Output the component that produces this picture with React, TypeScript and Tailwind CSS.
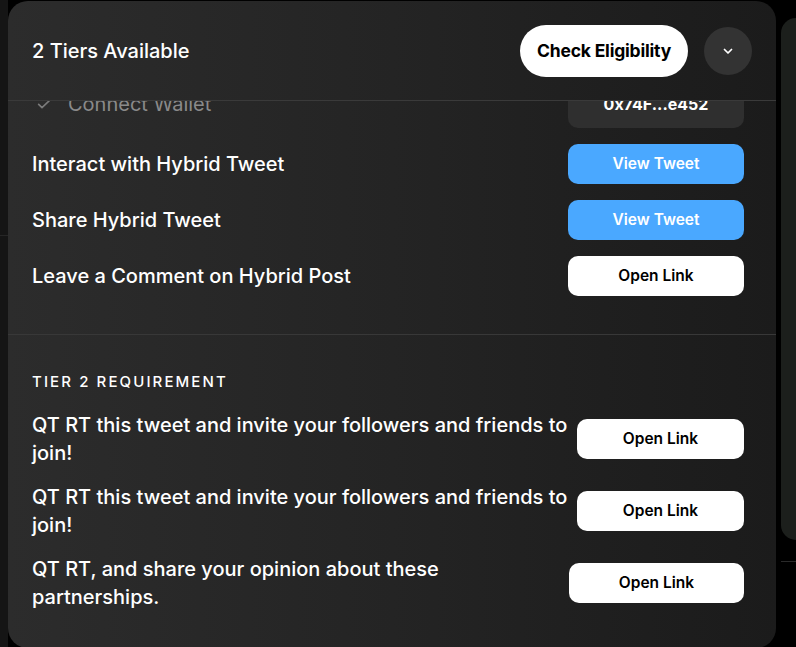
import React from 'react';

const font = "font-['Inter','Noto_Sans',sans-serif]";

function ChevronDown() {
  return (
    <svg width="12" height="12" viewBox="0 0 24 24" fill="none" stroke="white" strokeWidth="3.5" strokeLinecap="round" strokeLinejoin="round">
      <path d="M5 9l7 7 7-7" />
    </svg>
  );
}

function Check() {
  return (
    <svg width="16" height="16" viewBox="0 0 24 24" fill="none" stroke="#7a7a7a" strokeWidth="2.5" strokeLinecap="round" strokeLinejoin="round">
      <path d="M4 12.5l5 5L20 7" />
    </svg>
  );
}

const tier1 = [
  { label: 'Interact with Hybrid Tweet', action: 'View Tweet', blue: true },
  { label: 'Share Hybrid Tweet', action: 'View Tweet', blue: true },
  { label: 'Leave a Comment on Hybrid Post', action: 'Open Link', blue: false },
];

const tier2 = [
  { label: 'QT RT this tweet and invite your followers and friends to join!', w: 'w-[167px]' },
  { label: 'QT RT this tweet and invite your followers and friends to join!', w: 'w-[167px]' },
  { label: 'QT RT, and share your opinion about these partnerships.', w: 'w-[175px]' },
];

export default function App() {
  return (
    <div className={`flex w-[796px] h-[647px] bg-black overflow-hidden ${font}`}>
      {/* left backdrop */}
      <div className="w-2 shrink-0 bg-[#151515] flex flex-col">
        <div className="h-[235px]" />
        <div className="h-px bg-[#262626]" />
      </div>

      {/* panel */}
      <div className="w-[768px] shrink-0 h-[647px] mt-px rounded-[20px] bg-gradient-to-r from-[#2c2c2c] via-[#242424] to-[#1b1b1b] flex flex-col overflow-hidden">
        <div className="h-[100px] shrink-0 border-b border-[#3a3a3a] flex items-center justify-between pl-6 pr-6">
          <span className="text-[20px] font-medium text-white">2 Tiers Available</span>
          <div className="flex items-center gap-4">
            <button className="h-[52px] px-[17px] pt-0.5 rounded-full bg-white text-black text-[17.5px] font-bold tracking-[-0.2px]">
              Check Eligibility
            </button>
            <button className="w-12 h-12 rounded-full bg-[#333333] flex items-center justify-center">
              <ChevronDown />
            </button>
          </div>
        </div>

        <div className="flex-1 overflow-hidden">
          <div className="-mt-[13px] flex flex-col gap-4 pl-6 pr-8">
            <div className="h-10 flex items-center justify-between">
              <div className="flex items-center gap-4 pl-1 pb-2 text-[20px] text-[#8a8a8a]">
                <Check />
                <span>Connect Wallet</span>
              </div>
              <div className="w-[176px] h-10 pb-2 rounded-[10px] bg-[#2f2f2f] flex items-center justify-center text-[16px] font-bold text-white">
                0x74F...e452
              </div>
            </div>
            {tier1.map((r) => (
              <div key={r.label} className="h-10 flex items-center justify-between">
                <span className="text-[20px] font-medium text-white">{r.label}</span>
                <button
                  className={`w-[176px] h-10 rounded-[10px] text-[15.5px] font-semibold ${
                    r.blue ? 'bg-[#4aa8ff] text-white' : 'bg-white text-black'
                  }`}
                >
                  {r.action}
                </button>
              </div>
            ))}
          </div>

          <div className="mt-[38px] border-t border-[#383838] pt-[37px] pl-6 pr-8 pb-9">
            <div className="text-[15px] leading-5 font-medium tracking-[0.14em] text-white">TIER 2 REQUIREMENT</div>
            <div className="mt-[19px] flex flex-col gap-4">
              {tier2.map((r, i) => (
                <div key={i} className="flex items-center gap-1">
                  <span className="flex-1 text-[20px] leading-7 font-medium text-white">{r.label}</span>
                  <button className={`${r.w} shrink-0 h-10 rounded-[10px] bg-white text-black text-[15.5px] font-semibold`}>
                    Open Link
                  </button>
                </div>
              ))}
            </div>
          </div>
        </div>
      </div>

      {/* right backdrop */}
      <div className="flex-1 flex flex-col pl-[5px]">
        <div className="h-[18px]" />
        <div className="h-[522px] rounded-l-[16px] bg-[#1c1f1c]" />
        <div className="h-[21px]" />
        <div className="h-px bg-[#2a2a2a]" />
      </div>
    </div>
  );
}
